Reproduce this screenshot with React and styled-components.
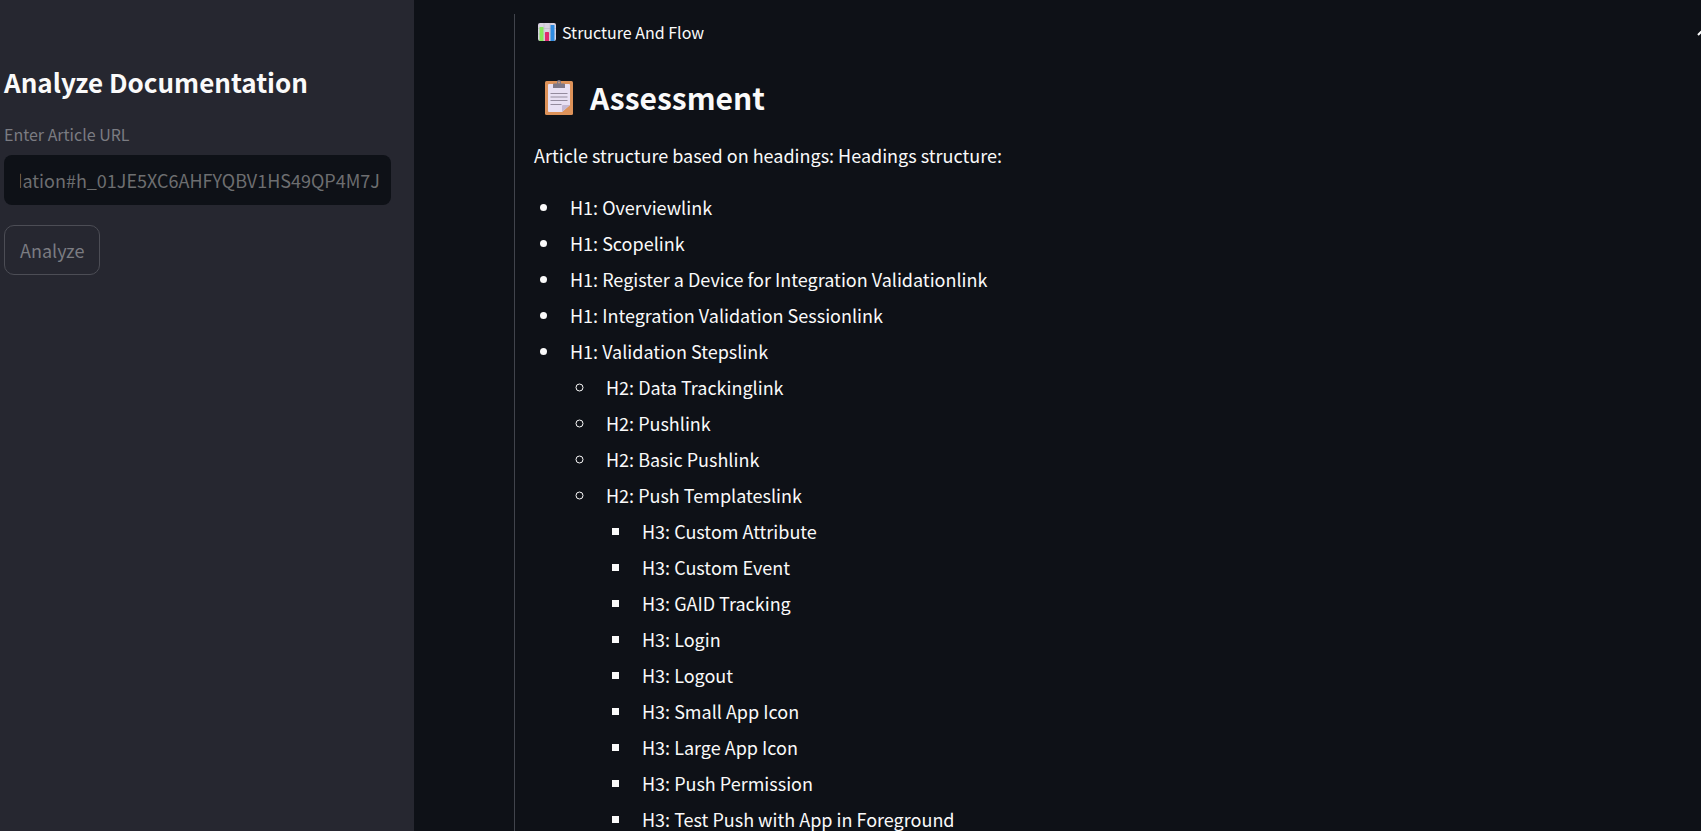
import React from "react";
import styled, { createGlobalStyle } from "styled-components";

const GlobalStyle = createGlobalStyle`
  *, *::before, *::after { box-sizing: border-box; }
  body {
    margin: 0;
    background: #0e1117;
    color: #fafafa;
    font-family: "Noto Sans CJK SC", "Noto Sans", sans-serif;
    font-size: 18px;
    line-height: 28px;
  }
`;

const Page = styled.div`
  display: flex;
  height: 100vh;
  overflow: hidden;
`;

const Sidebar = styled.aside`
  flex: 0 0 414px;
  padding: 63px 23px 0 4px;
  background: #262730;
`;

const SidebarTitle = styled.h2`
  margin: 0 0 20px;
  font-size: 26px;
  line-height: 38px;
  font-weight: 700;
`;

const Form = styled.form`
  display: flex;
  flex-direction: column;
  align-items: flex-start;
`;

const Label = styled.label`
  margin-bottom: 7px;
  font-size: 16px;
  line-height: 27px;
  color: #7b7c82;
`;

const UrlInput = styled.input`
  width: 100%;
  height: 50px;
  padding: 0 11px 0 16px;
  border: 0;
  border-radius: 8px;
  background: #0e1117;
  color: #6d6e70;
  font: inherit;
  direction: ${(p) => (p.$showEnd ? "rtl" : "ltr")};
`;

const AnalyzeButton = styled.button`
  height: 50px;
  margin-top: 20px;
  padding: 0 15px;
  border: 1px solid #4c4d55;
  border-radius: 10px;
  background: transparent;
  color: #7b7c82;
  font: inherit;
`;

const Main = styled.main`
  flex: 1;
  min-width: 0;
  padding: 14px 0 0 100px;
`;

const Panel = styled.section`
  margin-right: -32px;
  padding: 0 20px 0 19px;
  border-left: 1px solid #41444c;
`;

const PanelHeader = styled.button`
  display: flex;
  align-items: center;
  width: 100%;
  padding: 4px 0 5px 4px;
  border: 0;
  background: none;
  color: inherit;
  font: inherit;
  font-size: 16px;
  text-align: left;
`;

const PanelTitle = styled.span`
  flex: 1;
  margin-left: 6px;
`;

const Heading = styled.h1`
  display: flex;
  align-items: center;
  gap: 17px;
  margin: 25px 0 23px;
  padding-left: 11px;
  font-size: 30px;
  line-height: 42px;
  font-weight: 700;
`;

const Intro = styled.p`
  margin: 0 0 24px;
`;

const List = styled.ul`
  margin: 0;
  padding: 0;
  list-style-type: ${(p) => p.$marker};
`;

const Item = styled.li`
  margin: 8px 0 8px 27px;
  padding-left: 9px;
`;

const markers = ["disc", "circle", "square"];

const headings = [
  { text: "H1: Overviewlink" },
  { text: "H1: Scopelink" },
  { text: "H1: Register a Device for Integration Validationlink" },
  { text: "H1: Integration Validation Sessionlink" },
  {
    text: "H1: Validation Stepslink",
    children: [
      { text: "H2: Data Trackinglink" },
      { text: "H2: Pushlink" },
      { text: "H2: Basic Pushlink" },
      {
        text: "H2: Push Templateslink",
        children: [
          { text: "H3: Custom Attribute" },
          { text: "H3: Custom Event" },
          { text: "H3: GAID Tracking" },
          { text: "H3: Login" },
          { text: "H3: Logout" },
          { text: "H3: Small App Icon" },
          { text: "H3: Large App Icon" },
          { text: "H3: Push Permission" },
          { text: "H3: Test Push with App in Foreground" },
        ],
      },
    ],
  },
];

function HeadingTree({ items, level = 0 }) {
  return (
    <List $marker={markers[level]}>
      {items.map((item) => (
        <Item key={item.text}>
          {item.text}
          {item.children && <HeadingTree items={item.children} level={level + 1} />}
        </Item>
      ))}
    </List>
  );
}

function ChartIcon() {
  return (
    <svg width="18" height="18" viewBox="0 0 18 18" aria-hidden="true">
      <rect width="18" height="18" rx="2" fill="#d9d3e0" />
      <path d="M0 5.5h18M0 11h18M6 0v18M12 0v18" stroke="#bdb5c8" strokeWidth=".6" />
      <rect x="1.5" y="4" width="4" height="14" rx=".5" fill="#86e65a" />
      <rect x="7" y="9" width="4" height="9" rx=".5" fill="#e0296f" />
      <rect x="12.5" y="2" width="4" height="16" rx=".5" fill="#2e8be0" />
    </svg>
  );
}

function ClipboardIcon() {
  return (
    <svg width="28" height="35" viewBox="0 0 28 35" aria-hidden="true">
      <rect y="1" width="28" height="34" rx="1.500" fill="#dd9259" />
      <path d="M4 4h20a1 1 0 0 1 1 1v20l-8 7H4a1 1 0 0 1-1-1V5a1 1 0 0 1 1-1z" fill="#e8e0f3" />
      <path d="M25 25l-8 7v-6a1 1 0 0 1 1-1z" fill="#c4b8d3" />
      <path d="M5.500 13.500h17M5.500 17h17M5.500 20.500h17M5.500 24.500h11" stroke="#948b9e" strokeWidth="1.200" />
      <path d="M8 8V4.500a1 1 0 0 1 1-1h3V2a2 2 0 0 1 4 0v1.500h3a1 1 0 0 1 1 1V8z" fill="#7f7888" />
      <circle cx="14" cy="2.500" r=".9" fill="#d9a179" />
    </svg>
  );
}

function ChevronUp() {
  return (
    <svg width="16" height="10" viewBox="0 0 16 10" fill="none" aria-hidden="true">
      <path d="M1 8L8 1l7 7" stroke="#fafafa" strokeWidth="2" />
    </svg>
  );
}

export default function App() {
  return (
    <Page>
      <GlobalStyle />
      <Sidebar>
        <SidebarTitle>Analyze Documentation</SidebarTitle>
        <Form onSubmit={(e) => e.preventDefault()}>
          <Label htmlFor="article-url">Enter Article URL</Label>
          <UrlInput
            id="article-url"
            type="text"
            disabled
            $showEnd
            defaultValue="validation#h_01JE5XC6AHFYQBV1HS49QP4M7J"
          />
          <AnalyzeButton type="submit" disabled>
            Analyze
          </AnalyzeButton>
        </Form>
      </Sidebar>
      <Main>
        <Panel>
          <PanelHeader type="button" aria-expanded="true">
            <ChartIcon />
            <PanelTitle>Structure And Flow</PanelTitle>
            <ChevronUp />
          </PanelHeader>
          <Heading>
            <ClipboardIcon />
            Assessment
          </Heading>
          <Intro>Article structure based on headings: Headings structure:</Intro>
          <HeadingTree items={headings} />
        </Panel>
      </Main>
    </Page>
  );
}
